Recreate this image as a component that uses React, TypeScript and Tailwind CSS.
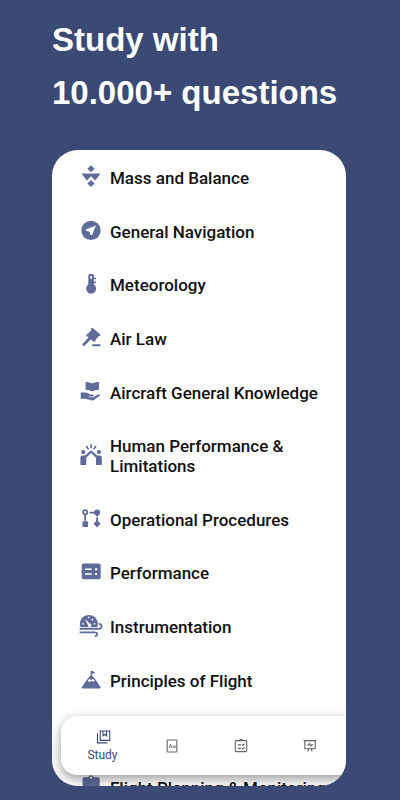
import type { ReactNode } from "react";

type Subject = { name: string; icon: ReactNode };
type Tab = { name: string; icon: ReactNode; active?: boolean };

const subjects: Subject[] = [
  {
    name: "Mass and Balance",
    icon: (
      <>
        <path d="m12 .2 3.6 3.5L12 7.2 8.400 3.700z" />
        <path d="M2.400 8.600h19.200L16.200 15.400 12 11.300 7.800 15.400z" />
        <path d="m12 15 3.600 3.500L12 22l-3.600-3.500z" />
      </>
    ),
  },
  {
    name: "General Navigation",
    icon: (
      <>
        <circle cx="12" cy="11.4" r="9.6" />
        <path d="M16.9 6.5 13 16.2l-1.6-.5-.7-3-3.7-.9-.3-1.3z" fill="white" />
      </>
    ),
  },
  {
    name: "Meteorology",
    icon: (
      <>
        <path d="M9.3 3.6Q9.3 2 11 2h2.4q1.6 0 1.6 1.6v2.2h2v1.5h-2v2.2h2V11h-2v1.6a5 5 0 1 1-5.7 0z" />
        <path d="M11.3 4h1.6v2.8h-1.6z" fill="white" />
      </>
    ),
  },
  {
    name: "Air Law",
    icon: (
      <>
        <path d="m12 2.4 1.4-.6 8 6.6-.3 1.6-1.5.3-3.2 3.6.2 1.3-1.4.7-7.8-6.2.3-1.6 1.3-.3 3.2-3.9z" />
        <path d="m10 10.8 2.3 1.9-7.2 7.6-2-1.6zM13.2 18.3h8.2v1.9h-8.2z" />
      </>
    ),
  },
  {
    name: "Aircraft General Knowledge",
    icon: (
      <>
        <path d="M6.6 2q3.7-.3 6.6 1.5Q16.1 1.7 20 2v7.8q-3.9-.2-6.8 1.700-2.900-1.900-6.600-1.700z" />
        <path d="M1.7 12.6h4.7q1.8 0 3.3 1l1.200.8h2.600q1.400.1 1.400 1.200 0 .8-1.300 1H9.800v.6h4.600l4.100-2.500q1.800-.8 2.900.6l-6.200 4.500q-1.300.9-3 .5l-5.400-1.500H1.700z" />
      </>
    ),
  },
  {
    name: "Human Performance & Limitations",
    icon: (
      <>
        <circle cx="4.3" cy="9" r="2.1" />
        <circle cx="19.9" cy="9" r="2.1" />
        <path d="M1.4 14.4q0-2 2-2h2.5l5.3-4.5q.9-.7 1.8 0l5.3 4.5h2.500q2 0 2 2V22H17v-7.200l-4.900-4.800-4.900 4.800V22H1.400z" />
        <path d="M12.1 1.2v4M7.2 2.9l2.400 3.300M17 2.900l-2.400 3.300" fill="none" stroke="currentColor" strokeWidth="1.7" />
      </>
    ),
  },
  {
    name: "Operational Procedures",
    icon: (
      <>
        <path d="M6.2 7.4v6.4M10.7 5.6H16M18.1 7v7.5" fill="none" stroke="currentColor" strokeWidth="1.8" />
        <circle cx="6.2" cy="5.3" r="2.1" fill="white" stroke="currentColor" strokeWidth="1.7" />
        <circle cx="18.1" cy="5.6" r="3" />
        <rect x="3.5" y="14.3" width="5.6" height="5.7" rx=".6" />
        <path d="m18.1 12.9 3.5 3.8-3.5 3.7-3.5-3.7z" />
        <path d="M16.5 9.5h3.2v1h-3.2z" fill="white" />
      </>
    ),
  },
  {
    name: "Performance",
    icon: (
      <>
        <rect x="2.7" y="3.6" width="19" height="15.7" rx="1.8" />
        <path d="M6 8.6h6.7v1.5H6zM6 13.2h6.7v1.5H6zM16 8.2h2.2v2H16zM16 12.9h2.2v2H16z" fill="white" />
      </>
    ),
  },
  {
    name: "Instrumentation",
    icon: (
      <>
        <path d="M1.5 13.3A9 9 0 1 1 18.2 13.3z" />
        <path d="m5.9 5.1 4.9 4.3a1.8 1.8 0 1 1-1.9 1.5z" fill="white" />
        <g fill="white">
          <circle cx="9.7" cy="3.3" r=".9" />
          <circle cx="4" cy="9.8" r=".9" />
          <circle cx="13.5" cy="5.5" r=".9" />
          <circle cx="15.5" cy="9.8" r=".9" />
        </g>
        <path d="M.6 14.9h19q3 0 3-2.6 0-2.5-2.9-2.5M.6 18.3h15.3q2.3 0 2.3 2 0 1.8-2.3 2" fill="none" stroke="currentColor" strokeWidth="1.7" />
      </>
    ),
  },
  {
    name: "Principles of Flight",
    icon: (
      <>
        <path d="M11.6 2.7h1.2l3.5 1.8-3.4 1.8v1.3l2.5 2.5 6.3 9.1q.3 1.1-1 1.2H3.5q-1.2-.1-.8-1.2L9.2 10l2.4-2.4z" />
        <path d="m8.6 12.9 1.8-2.2 1.6 1.5 1.6-1.5 2.4 2.1-2.2 1-1.8-1-1.6 1.2z" fill="white" />
      </>
    ),
  },
  { name: "Radio Communications", icon: <circle cx="12" cy="12" r="8" /> },
  {
    name: "Flight Planning & Monitoring",
    icon: (
      <>
        <path d="M5.5 2.2h3.7a3 3 0 0 1 5.6 0h3.9q2 0 2 2V20H3.5V4.2q0-2 2-2z" />
        <circle cx="12" cy="2.7" r="1.1" fill="white" />
      </>
    ),
  },
];

const tabs: Tab[] = [
  {
    name: "Study",
    active: true,
    icon: <path d="M5.2 2h9.6v9.4H5.2zM2.5 4.2v9.7h10M8 2v4.8l1.8-1.5 1.8 1.5V2" />,
  },
  {
    name: "Glossary",
    icon: (
      <>
        <rect x="3.2" y="2" width="9.6" height="12" rx=".6" />
        <path d="m5 10 1.5-4L8 10M5.6 8.8h1.8M11 7.6v2.5M11 8.8a1 1.1 0 1 0-2 0 1 1.1 0 1 0 2 0" strokeWidth=".7" />
      </>
    ),
  },
  {
    name: "Exams",
    icon: (
      <>
        <rect x="2.3" y="2.6" width="11.4" height="11" rx=".6" />
        <path d="M6.2 2.5q.3-1.3 1.8-1.3t1.8 1.3M4.8 6.9H8M4.8 10.4H8M9 6.7l.9.8 1.7-1.8M9 10.2l.9.8 1.7-1.8" />
      </>
    ),
  },
  {
    name: "Statistics",
    icon: <path d="M1.6 2.6h12.8M2.8 2.6v8.1h10.4V2.6M4.8 7h1.6l1.1-1.4L8.7 8l.9-1.2h1.7M6.8 10.7l-.9 3M9.2 10.7l.9 3" />,
  },
];

function SubjectRow({ name, icon }: Subject) {
  return (
    <li>
      <a href="#" className="flex items-center gap-[7px]">
        <svg viewBox="0 1 24 24" className="-my-0.5 size-6 shrink-0 overflow-visible text-[#5f6b98]" fill="currentColor" aria-hidden="true">
          {icon}
        </svg>
        <span className="text-[17px] leading-5 font-medium text-[#111]">{name}</span>
      </a>
    </li>
  );
}

function TabBar() {
  return (
    <nav className="absolute right-0 bottom-[11px] left-[9px] grid h-[59px] grid-cols-4 rounded-l-2xl bg-white pr-0.5 pl-[7px] shadow-[0_4px_12px_rgba(0,0,0,0.4)]">
      {tabs.map((tab) => (
        <button
          key={tab.name}
          aria-label={tab.name}
          className={`flex flex-col items-center justify-center gap-0.5 ${tab.active ? "text-[#3b4a78]" : "text-[#666]"}`}
        >
          <svg viewBox="0 0 16 16" className="size-4" fill="none" stroke="currentColor" strokeWidth="1.1" aria-hidden="true">
            {tab.icon}
          </svg>
          {tab.active && <span className="text-xs leading-4">{tab.name}</span>}
        </button>
      ))}
    </nav>
  );
}

export default function App() {
  return (
    <div className="flex h-screen min-h-[640px] flex-col bg-[#3b4a74] pr-[54px] pb-3.5 pl-[52px] font-[Roboto,sans-serif]">
      <h1 className="-mr-8 pt-[13px] pb-[31px] font-['Liberation_Sans',Arial,sans-serif] text-[33px] leading-[53px] font-bold text-white">
        Study with
        <br />
        10.000+ questions
      </h1>

      <main className="relative flex flex-1 flex-col overflow-hidden rounded-[26px] bg-white">
        {/* the list runs on under the tab bar and past the bottom edge */}
        <ul className="-mb-3 flex flex-1 flex-col justify-between pt-[18px] pr-3 pl-[27px]">
          {subjects.map((s) => (
            <SubjectRow key={s.name} {...s} />
          ))}
        </ul>
        <TabBar />
      </main>
    </div>
  );
}
